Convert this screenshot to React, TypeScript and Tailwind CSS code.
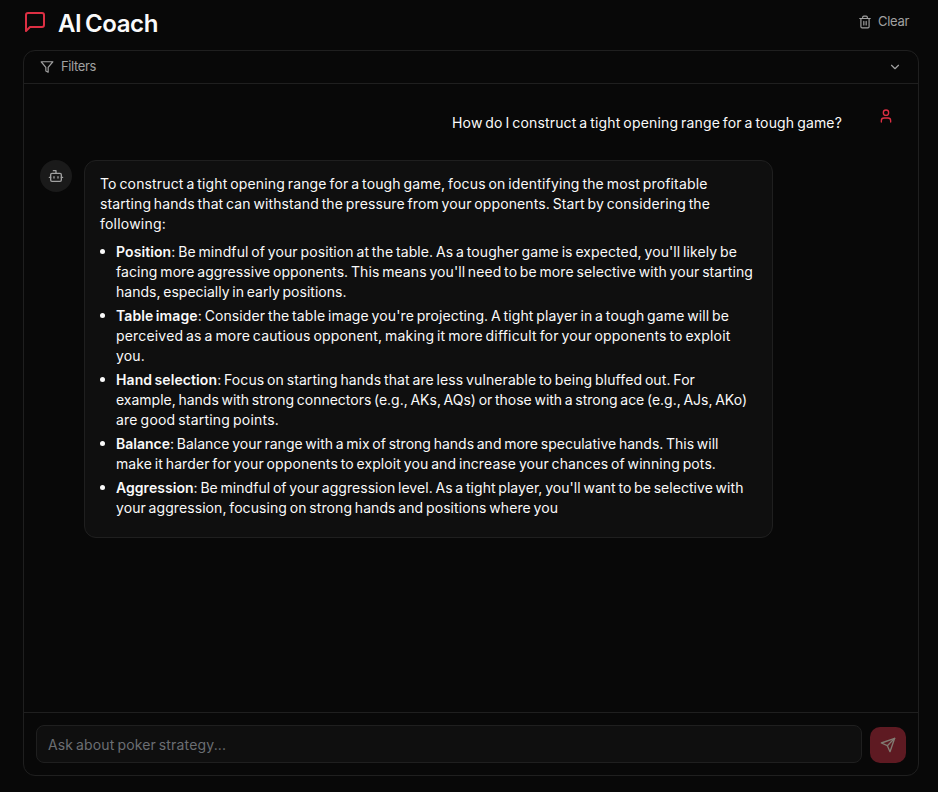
import { useLayoutEffect, useRef, useState, type ReactNode } from 'react';

/** One line of text whose tracking is adjusted so that it fills a given width. */
function Line({ width, children, className = '' }: { width: number; children: ReactNode; className?: string }) {
  const ref = useRef<HTMLSpanElement>(null);
  const [spacing, setSpacing] = useState(0);
  useLayoutEffect(() => {
    const el = ref.current;
    if (!el) return;
    const count = el.textContent?.length ?? 1;
    const current = parseFloat(getComputedStyle(el).letterSpacing) || 0;
    setSpacing(current + (width - el.getBoundingClientRect().width) / count);
  }, [width]);
  return (
    <span className={`block ${className}`}>
      <span ref={ref} className="whitespace-nowrap" style={{ letterSpacing: `${spacing}px` }}>
        {children}
      </span>
    </span>
  );
}

type Row = [string, number];

const intro: Row[] = [
  ['To construct a tight opening range for a tough game, focus on identifying the most profitable', 607.5],
  ['starting hands that can withstand the pressure from your opponents. Start by considering the', 610],
  ['following:', 66],
];

const points: { term: string; lines: Row[] }[] = [
  {
    term: 'Position',
    lines: [
      [": Be mindful of your position at the table. As a tougher game is expected, you'll likely be", 621],
      ["facing more aggressive opponents. This means you'll need to be more selective with your starting", 637],
      ['hands, especially in early positions.', 230.5],
    ],
  },
  {
    term: 'Table image',
    lines: [
      [": Consider the table image you're projecting. A tight player in a tough game will be", 613],
      ['perceived as a more cautious opponent, making it more difficult for your opponents to exploit', 614.5],
      ['you.', 29],
    ],
  },
  {
    term: 'Hand selection',
    lines: [
      [': Focus on starting hands that are less vulnerable to being bluffed out. For', 579],
      ['example, hands with strong connectors (e.g., AKs, AQs) or those with a strong ace (e.g., AJs, AKo)', 631],
      ['are good starting points.', 163],
    ],
  },
  {
    term: 'Balance',
    lines: [
      [': Balance your range with a mix of strong hands and more speculative hands. This will', 602.5],
      ['make it harder for your opponents to exploit you and increase your chances of winning pots.', 600],
    ],
  },
  {
    term: 'Aggression',
    lines: [
      [": Be mindful of your aggression level. As a tight player, you'll want to be selective with", 627.5],
      ['your aggression, focusing on strong hands and positions where you', 442],
    ],
  },
];

function Icon({ size, className = '', children }: { size: number; className?: string; children: ReactNode }) {
  return (
    <svg
      width={size}
      height={size}
      viewBox="0 0 24 24"
      fill="none"
      stroke="currentColor"
      strokeWidth={2}
      strokeLinecap="round"
      strokeLinejoin="round"
      className={`shrink-0 ${className}`}
    >
      {children}
    </svg>
  );
}

export default function App() {
  return (
    <div className="flex h-[792px] w-[938px] flex-col bg-[#080808] pr-[19px] pb-4 pl-[23px] font-['Inter','Liberation_Sans',sans-serif] text-sm text-[#fafafa] [word-spacing:-1.25px]">
      <header className="flex h-[50px] shrink-0 items-start justify-between">
        <div className="flex items-start">
          <Icon size={24} className="mt-[10px] text-[#dc2f43]">
            <path d="M21 15a2 2 0 0 1-2 2H7l-4 4V5a2 2 0 0 1 2-2h14a2 2 0 0 1 2 2z" />
          </Icon>
          <h1 className="mt-2 ml-[11px] text-2xl leading-8 font-semibold [word-spacing:-2px]">
            <Line width={100}>AI Coach</Line>
          </h1>
        </div>
        <button className="mt-[13px] mr-[10px] flex items-center gap-[6px] text-[13px] leading-4 text-[#a1a1a1]">
          <Icon size={14}>
            <path d="M3 6h18" />
            <path d="M19 6v14c0 1-1 2-2 2H7c-1 0-2-1-2-2V6" />
            <path d="M8 6V4c0-1 1-2 2-2h4c1 0 2 1 2 2v2" />
            <path d="M10 11v6M14 11v6" />
          </Icon>
          <Line width={31} className="pb-0.5">Clear</Line>
        </button>
      </header>

      <main className="flex min-h-0 flex-1 flex-col rounded-xl border border-[#1f1f1f]">
        <button className="flex h-[33px] shrink-0 items-center justify-between border-b border-[#1f1f1f] px-4 text-[13px] leading-4 text-[#a1a1a1]">
          <span className="flex items-center gap-[7px]">
            <Icon size={14}>
              <path d="M22 3H2l8 9.46V19l4 2v-8.54L22 3z" />
            </Icon>
            <Line width={35} className="pb-0.5">Filters</Line>
          </span>
          <Icon size={14}>
            <path d="m6 9 6 6 6-6" />
          </Icon>
        </button>

        <section className="min-h-0 flex-1 px-4 pt-4">
          <div className="flex items-start justify-end gap-3">
            <p className="px-4 pt-[13px] leading-5">
              <Line width={390}>How do I construct a tight opening range for a tough game?</Line>
            </p>
            <div className="flex size-8 items-center justify-center text-[#dc2f43]">
              <Icon size={16}>
                <path d="M19 21v-2a4 4 0 0 0-4-4H9a4 4 0 0 0-4 4v2" />
                <circle cx="12" cy="7" r="4" />
              </Icon>
            </div>
          </div>

          <div className="mt-[27px] flex items-start gap-3">
            <div className="flex size-8 shrink-0 items-center justify-center rounded-full bg-[#1a1a1a] text-[#a1a1a1]">
              <Icon size={16}>
                <path d="M12 8V4H8" />
                <rect width="16" height="12" x="4" y="8" rx="2" />
                <path d="M2 14h2M20 14h2M15 13v2M9 13v2" />
              </Icon>
            </div>
            <article className="h-[378px] w-[689px] rounded-xl border border-[#1f1f1f] bg-[#0f0f0f] px-[15px] pt-[13px] leading-5">
              {intro.map(([text, width]) => (
                <Line key={text} width={width}>
                  {text}
                </Line>
              ))}
              <ul className="mt-2 flex flex-col gap-1">
                {points.map(({ term, lines }) => (
                  <li key={term} className="flex">
                    <span className="mt-[7px] mr-[11px] size-[5px] shrink-0 rounded-full bg-[#fafafa]" />
                    <div>
                      {lines.map(([text, width], i) => (
                        <Line key={text} width={width}>
                          {i === 0 && <strong className="font-semibold">{term}</strong>}
                          {text}
                        </Line>
                      ))}
                    </div>
                  </li>
                ))}
              </ul>
            </article>
          </div>
        </section>

        <footer className="flex shrink-0 items-end gap-2 border-t border-[#1f1f1f] p-3">
          <input
            className="h-[38px] min-w-0 flex-1 rounded-lg border border-[#1f1f1f] bg-[#0f0f0f] px-[11px] text-sm tracking-[0.16px] outline-none [word-spacing:-1.25px] placeholder:text-[#6b6e73]"
            placeholder="Ask about poker strategy..."
          />
          <button className="flex size-9 items-center justify-center rounded-[10px] bg-[#5e1a22] text-[#817b72]">
            <Icon size={16}>
              <path d="m22 2-7 20-4-9-9-4Z" />
              <path d="M22 2 11 13" />
            </Icon>
          </button>
        </footer>
      </main>
    </div>
  );
}
